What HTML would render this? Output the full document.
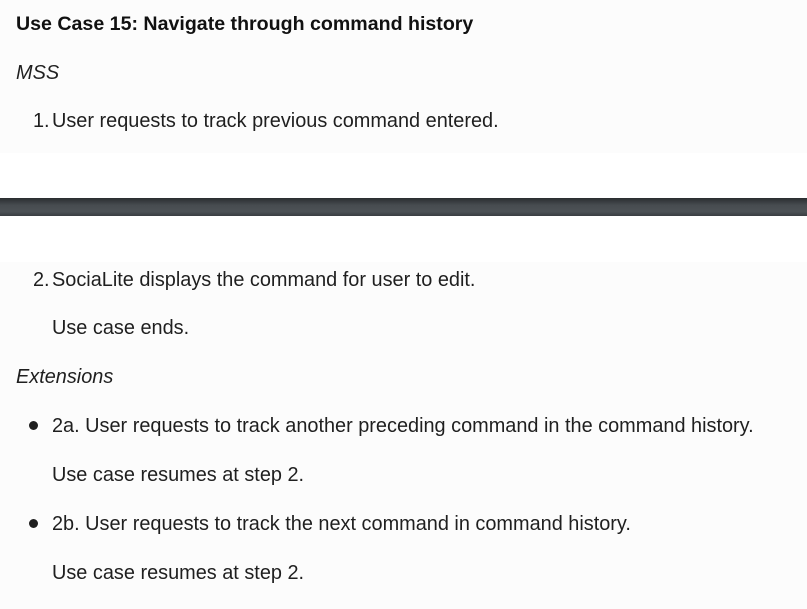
<!DOCTYPE html>
<html><head><style>
body{margin:0;width:807px;height:609px;overflow:hidden;background:#fcfcfc;font-family:"Liberation Sans",sans-serif;color:#1f1f1f;font-size:19.9px;position:relative}
.t{position:absolute;white-space:nowrap;line-height:24px}
.b{position:absolute;width:9px;height:9px;border-radius:50%;background:#1f1f1f}
</style></head><body>
<div style="position:absolute;left:0;top:153px;width:807px;height:109px;background:#fff"></div>
<div style="position:absolute;left:0;top:198px;width:807px;height:18px;background:linear-gradient(#2a2d30,#474c50 40%,#4d5256 75%,#3a3e42)"></div>
<div class="t" style="left:16px;top:12px;font-weight:bold;font-size:19.6px;color:#111">Use Case 15: Navigate through command history</div>
<div class="t" style="left:16px;top:61px;font-style:italic">MSS</div>
<div class="t" style="left:33px;top:109px">1.</div><div class="t" style="left:52px;top:109px">User requests to track previous command entered.</div>
<div class="t" style="left:33px;top:268px">2.</div><div class="t" style="left:52px;top:268px">SociaLite displays the command for user to edit.</div>
<div class="t" style="left:52px;top:316px">Use case ends.</div>
<div class="t" style="left:16px;top:365px;font-style:italic">Extensions</div>
<div class="b" style="left:29px;top:421px"></div>
<div class="t" style="left:52px;top:414px">2a. User requests to track another preceding command in the command history.</div>
<div class="t" style="left:52px;top:463px">Use case resumes at step 2.</div>
<div class="b" style="left:29px;top:519px"></div>
<div class="t" style="left:52px;top:512px">2b. User requests to track the next command in command history.</div>
<div class="t" style="left:52px;top:561px">Use case resumes at step 2.</div>
</body></html>
